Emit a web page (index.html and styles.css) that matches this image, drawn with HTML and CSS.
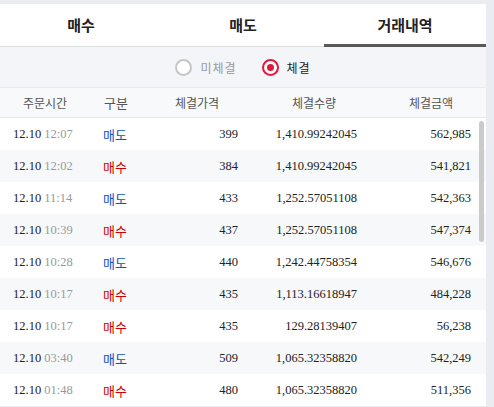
FILE: index.html
```html
<!DOCTYPE html>
<html lang="ko">
<head>
<meta charset="utf-8">
<link rel="stylesheet" href="styles.css">
</head>
<body>
<div class="panel">
  <div class="tabs">
    <div class="tab">매수</div>
    <div class="tab">매도</div>
    <div class="tab active">거래내역</div>
  </div>
  <div class="filter">
    <label class="radio"><span class="circle"></span><span class="rlabel">미체결</span></label>
    <label class="radio on"><span class="circle"></span><span class="rlabel">체결</span></label>
  </div>
  <div class="row head">
    <div class="c1">주문시간</div>
    <div class="c2">구분</div>
    <div class="c3">체결가격</div>
    <div class="c4">체결수량</div>
    <div class="c5">체결금액</div>
  </div>
  <div class="list">
    <div class="row"><div class="c1 num">12.10 <span class="t">12:07</span></div><div class="c2 sell">매도</div><div class="c3 num">399</div><div class="c4 num">1,410.99242045</div><div class="c5 num">562,985</div></div>
    <div class="row alt"><div class="c1 num">12.10 <span class="t">12:02</span></div><div class="c2 buy">매수</div><div class="c3 num">384</div><div class="c4 num">1,410.99242045</div><div class="c5 num">541,821</div></div>
    <div class="row"><div class="c1 num">12.10 <span class="t">11:14</span></div><div class="c2 sell">매도</div><div class="c3 num">433</div><div class="c4 num">1,252.57051108</div><div class="c5 num">542,363</div></div>
    <div class="row alt"><div class="c1 num">12.10 <span class="t">10:39</span></div><div class="c2 buy">매수</div><div class="c3 num">437</div><div class="c4 num">1,252.57051108</div><div class="c5 num">547,374</div></div>
    <div class="row"><div class="c1 num">12.10 <span class="t">10:28</span></div><div class="c2 sell">매도</div><div class="c3 num">440</div><div class="c4 num">1,242.44758354</div><div class="c5 num">546,676</div></div>
    <div class="row alt"><div class="c1 num">12.10 <span class="t">10:17</span></div><div class="c2 buy">매수</div><div class="c3 num">435</div><div class="c4 num">1,113.16618947</div><div class="c5 num">484,228</div></div>
    <div class="row"><div class="c1 num">12.10 <span class="t">10:17</span></div><div class="c2 buy">매수</div><div class="c3 num">435</div><div class="c4 num">129.28139407</div><div class="c5 num">56,238</div></div>
    <div class="row alt"><div class="c1 num">12.10 <span class="t">03:40</span></div><div class="c2 sell">매도</div><div class="c3 num">509</div><div class="c4 num">1,065.32358820</div><div class="c5 num">542,249</div></div>
    <div class="row"><div class="c1 num">12.10 <span class="t">01:48</span></div><div class="c2 buy">매수</div><div class="c3 num">480</div><div class="c4 num">1,065.32358820</div><div class="c5 num">511,356</div></div>
    <div class="scrollbar"></div>
  </div>
</div>
</body>
</html>
```
FILE: styles.css
```css
* { box-sizing: border-box; }
html, body { margin: 0; padding: 0; }
body {
  background: #e9ecf1;
  height: 407px;
  overflow: hidden;
  padding-top: 4px;
  font-family: "Noto Sans CJK KR", "Noto Sans", sans-serif;
}
.panel {
  width: 486px;
  background: #fff;
}
.tabs {
  display: grid;
  grid-template-columns: repeat(3, 1fr);
  height: 43px;
  border-bottom: 1px solid #dcdde1;
}
.tab {
  display: flex;
  align-items: center;
  justify-content: center;
  font-size: 15px;
  font-weight: bold;
  color: #222;
  padding-bottom: 1px;
}
.tab.active {
  border-bottom: 3px solid #585858;
  margin-bottom: -1px;
  padding-top: 1px;
  padding-bottom: 0;
}
.filter {
  height: 40px;
  background: #f4f5f8;
  display: flex;
  align-items: center;
  justify-content: center;
  gap: 25px;
}
.radio {
  display: flex;
  align-items: center;
  gap: 8px;
  font-size: 12px;
}
.circle {
  width: 17px;
  height: 17px;
  border-radius: 50%;
  border: 2px solid #c6c6c6;
  background: #fff;
  display: flex;
  align-items: center;
  justify-content: center;
}
.rlabel { color: #999; letter-spacing: 1px; }
.radio.on .circle { border-color: #e0193c; }
.radio.on .circle::after {
  content: "";
  width: 7px;
  height: 7px;
  border-radius: 50%;
  background: #e0193c;
}
.radio.on .rlabel { color: #222; }
.row {
  display: grid;
  grid-template-columns: 90px 52px 110px 124px 110px;
  height: 32px;
  align-items: center;
  font-size: 12px;
  color: #222;
}
.row.head {
  height: 31px;
  background: #f8f9fb;
  border-top: 1px solid #e8e9ec;
  border-bottom: 1px solid #e8e9ec;
  color: #555;
  text-align: center;
}
.row.head > div { text-align: center; padding: 0; }
.row.alt { background: #f7f8fa; }
.list { position: relative; }
.c1 { padding-left: 13px; }
.c2 { padding-left: 13px; font-size: 13px; }
.c3 { text-align: right; padding-right: 14px; }
.c4 { text-align: right; padding-right: 19px; }
.c5 { text-align: right; padding-right: 15px; }
.num {
  font-family: "Liberation Serif", serif;
  font-size: 12.5px;
  color: #222;
}
.t { color: #999; }
.sell { color: #0d52c2; }
.buy { color: #d30000; }
.scrollbar {
  position: absolute;
  right: 2px;
  top: 3px;
  width: 5px;
  height: 121px;
  border-radius: 3px;
  background: #cbcbcb;
}
```
